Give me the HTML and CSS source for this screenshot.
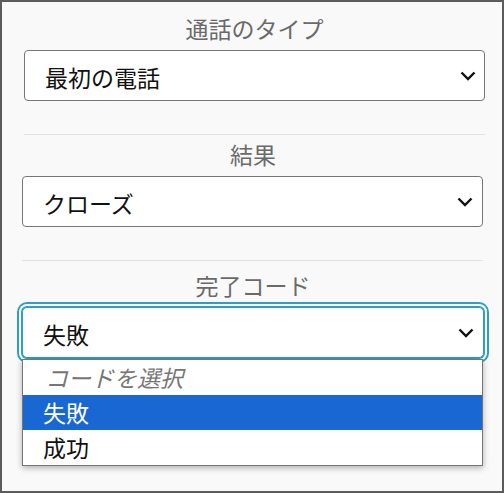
FILE: index.html
```html
<!DOCTYPE html>
<html lang="ja">
<head>
<meta charset="utf-8">
<link rel="stylesheet" href="styles.css">
</head>
<body>
<div class="frame">
  <div class="field field-first">
    <div class="label">通話のタイプ</div>
    <div class="select">
      <span class="value">最初の電話</span>
      <svg class="chev" width="16" height="10" viewBox="0 0 16 10"><polyline points="1.5,1.5 8,8 14.5,1.5" fill="none" stroke="#111" stroke-width="2.4"/></svg>
    </div>
    <div class="divider"></div>
  </div>
  <div class="field field-second">
    <div class="label">結果</div>
    <div class="select">
      <span class="value">クローズ</span>
      <svg class="chev" width="16" height="10" viewBox="0 0 16 10"><polyline points="1.5,1.5 8,8 14.5,1.5" fill="none" stroke="#111" stroke-width="2.4"/></svg>
    </div>
    <div class="divider"></div>
  </div>
  <div class="field field-third">
    <div class="label">完了コード</div>
    <div class="select-wrap">
      <div class="select focused">
        <span class="value">失敗</span>
        <svg class="chev" width="16" height="10" viewBox="0 0 16 10"><polyline points="1.5,1.5 8,8 14.5,1.5" fill="none" stroke="#111" stroke-width="2.4"/></svg>
      </div>
      <ul class="dropdown">
        <li class="opt placeholder">コードを選択</li>
        <li class="opt active">失敗</li>
        <li class="opt">成功</li>
      </ul>
    </div>
  </div>
</div>
</body>
</html>
```

FILE: styles.css
```css
html, body {
  margin: 0;
  padding: 0;
}

body {
  font-family: "Noto Sans CJK JP", "Noto Sans", sans-serif;
  background: #f9f9f9;
}

.frame {
  width: 504px;
  height: 493px;
  box-sizing: border-box;
  border: 2px solid #5c5c5c;
  background: #f9f9f9;
  padding-top: 11px;
  overflow: hidden;
}

.field {
  display: flex;
  flex-direction: column;
}

.field-first {
  padding: 0 17px 0 22px;
}

.field-second,
.field-third {
  padding: 0 18px 0 20px;
}

.field-second .label {
  margin-top: 4px;
}

.field-third .label {
  margin-top: 9px;
}

.label {
  height: 30px;
  line-height: 30px;
  font-size: 23px;
  color: #6a6a6a;
  text-align: center;
}

.select {
  margin-top: 7px;
  height: 51px;
  box-sizing: border-box;
  border: 1px solid #777;
  border-radius: 4px;
  background: #fff;
  display: flex;
  align-items: center;
  justify-content: space-between;
  padding: 3px 8px 0 20px;
  font-size: 23px;
  color: #111;
}

.select .value {
  line-height: 30px;
}

.chev {
  display: block;
  margin-top: -3px;
}

.field-second .select {
  padding-right: 9px;
}

.divider {
  height: 1px;
  background: #e2e2e2;
  margin-top: 33px;
}

.field-second .select {
  margin-right: 1px;
}

.field-second .divider {
  margin-right: 1px;
}

.select-wrap {
  position: relative;
  margin-top: 7px;
}

.select-wrap .select {
  margin-top: 0;
  border: 1px solid #2b9fc8;
  box-shadow: 0 0 0 1px #2b9fc8, 0 0 0 3px #fff, 0 0 0 5px #2b9fc8;
  border-radius: 5px;
  padding-right: 9px;
}

.dropdown {
  position: absolute;
  top: 52px;
  left: 0;
  right: 1px;
  margin: 0;
  padding: 0;
  list-style: none;
  background: #fff;
  border: 1px solid #767676;
  box-shadow: 0 2px 6px rgba(0, 0, 0, 0.3);
  z-index: 2;
}

.opt {
  height: 35px;
  line-height: 35px;
  padding-left: 20px;
  font-size: 23px;
  color: #111;
}

.opt.placeholder {
  color: #777;
  font-style: italic;
  padding-left: 22px;
}

.opt.active {
  background: #1967d2;
  color: #fff;
}
```
